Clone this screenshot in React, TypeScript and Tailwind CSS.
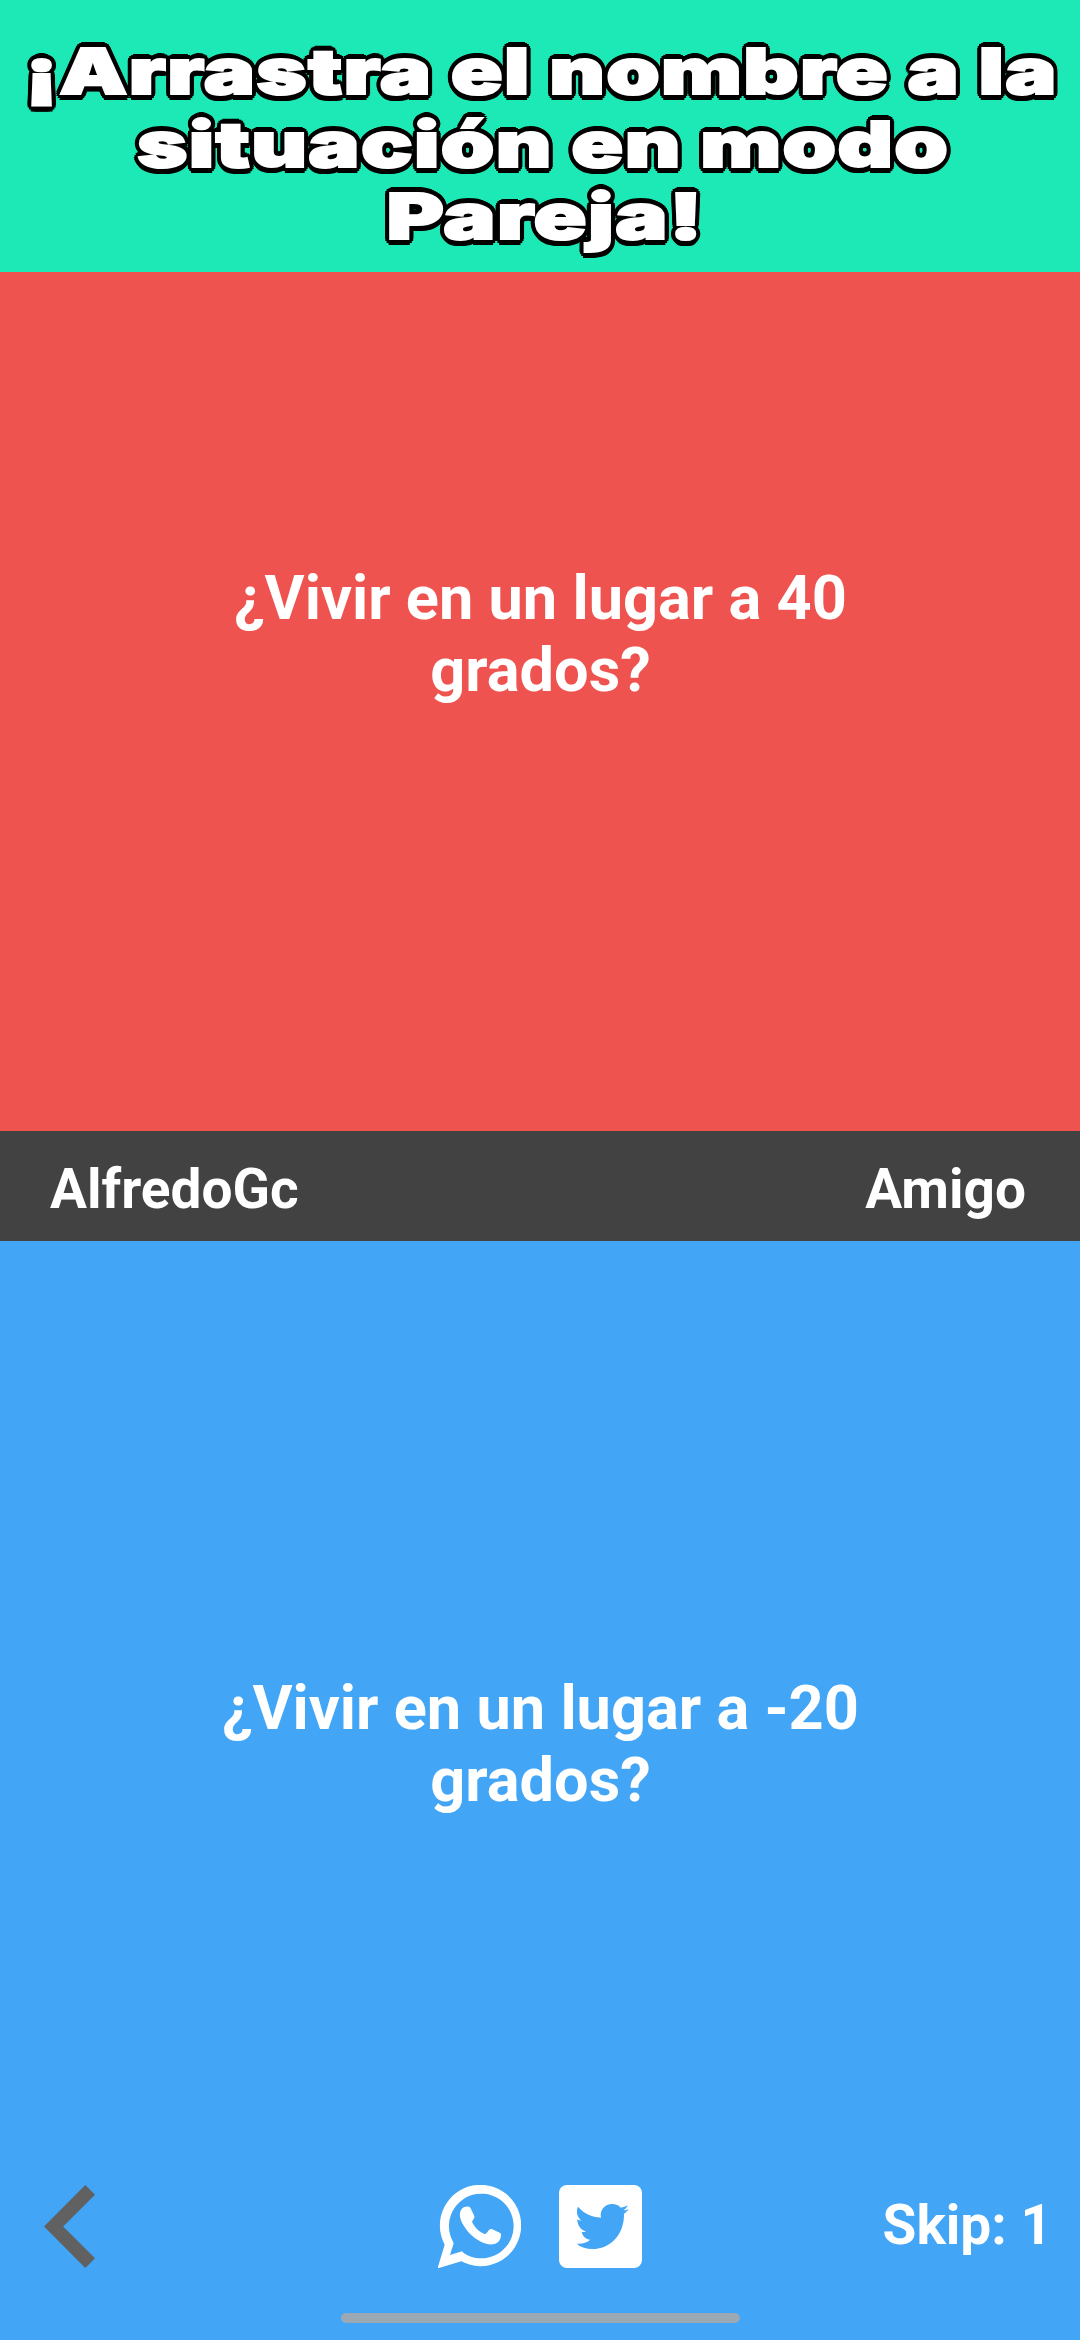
const titleLines = [
  { text: "¡Arrastra el nombre a la", className: "translate-x-[2px] scale-x-[1.36]" },
  { text: "situación en modo", className: "translate-x-[3px] scale-x-[1.362]" },
  { text: "Pareja!", className: "translate-x-[5px] scale-x-[1.39]" },
];

function Question({ text, className }: { text: string; className: string }) {
  return (
    <section className={`flex justify-center ${className}`}>
      <p className="w-[680px] text-center text-[61.3px] leading-[72px] font-bold">
        {text}
      </p>
    </section>
  );
}

function BackIcon() {
  return (
    <svg viewBox="0 0 51 83" className="h-[83px] w-[51px] fill-[#616161]">
      <path d="M41.3 0 51 9.7 19.2 41.5 51 73.3 41.3 83 0 41.5Z" />
    </svg>
  );
}

function WhatsappIcon() {
  return (
    <svg viewBox="12 15 249 249" className="size-[83px] fill-white">
      <path
        fillRule="evenodd"
        d="M32 194A122 122 0 1 1 82 244L15 264Q11 265 12 260ZM57 185A97 97 0 1 1 90 220L84 214 48 225 59 190Z"
      />
      <path d="M83 87C89 81 97 79 105 80C108 81 110 84 111 87L121 108C123 113 119 117 115 123C114 126 115 128 117 131C124 144 136 155 150 161C153 162 155 162 157 160L165 150C168 146 171 146 175 148L197 158C201 160 202 162 201 167C200 178 194 187 184 191C173 195 161 194 149 189C123 178 103 161 88 135C77 117 74 99 83 87Z" />
    </svg>
  );
}

function TwitterIcon() {
  return (
    <svg viewBox="12 15 249 249" className="size-[83px]">
      <rect x="12" y="15" width="249" height="249" rx="24" className="fill-white" />
      <path
        className="fill-[#42a5f5]"
        d="M69 80C86 100 110 111 138 113C133 90 150 72 172 72C183 72 191 76 197 83C205 82 212 79 218 76C216 83 211 88 205 91C211 91 216 89 221 87C217 93 213 97 207 101C208 160 170 207 112 207C95 207 78 202 65 191C81 193 95 188 106 179C93 178 83 169 80 155C84 156 89 156 93 155C77 150 67 136 67 118C71 121 76 122 80 122C67 112 62 95 69 80Z"
      />
    </svg>
  );
}

export default function App() {
  return (
    <main className="flex h-[2340px] w-[1080px] flex-col overflow-hidden bg-[#42a5f5] font-['Roboto',sans-serif] text-white">
      {/* HEADER */}
      <header className="flex h-[272px] shrink-0 flex-col items-center bg-[#1de9b6] pt-[35px]">
        <h1 className="flex flex-col items-center font-['Inter',sans-serif] text-[63px] leading-[72.5px] font-black tracking-[1px] whitespace-nowrap [-webkit-text-stroke:2px_white] [text-shadow:4px_0_black,-4px_0_black,0_6px_black,0_-6px_black,3.7px_2.3px_black,3.7px_-2.3px_black,-3.7px_2.3px_black,-3.7px_-2.3px_black,2.8px_4.2px_black,2.8px_-4.2px_black,-2.8px_4.2px_black,-2.8px_-4.2px_black,1.5px_5.5px_black,1.5px_-5.5px_black,-1.5px_5.5px_black,-1.5px_-5.5px_black]">
          {titleLines.map((line) => (
            <span key={line.text} className={line.className}>
              {line.text}
            </span>
          ))}
        </h1>
      </header>

      <Question
        text="¿Vivir en un lugar a 40 grados?"
        className="h-[859px] shrink-0 bg-[#ef5350] pt-[290px] pl-px"
      />

      {/* PLAYERS */}
      <div className="flex h-[110px] shrink-0 items-center justify-between bg-[#424242] pt-[6px] pr-[54px] pl-[50px] text-[55px] font-bold">
        <span>AlfredoGc</span>
        <span>Amigo</span>
      </div>

      <Question
        text="¿Vivir en un lugar a -20 grados?"
        className="flex-1 pt-[431px] pl-px"
      />

      {/* BOTTOM BAR */}
      <footer className="shrink-0">
        <div className="grid h-[83px] grid-cols-[1fr_auto_1fr] items-center px-[28px]">
          <button aria-label="Atrás" className="pl-[16px]">
            <BackIcon />
          </button>
          <div className="flex gap-[38px]">
            <WhatsappIcon />
            <TwitterIcon />
          </div>
          <span className="pb-[3px] text-right text-[55px] leading-[64px] font-bold">Skip: 1</span>
        </div>
        <div className="mx-auto mt-[45px] mb-[17px] h-[10px] w-[399px] rounded-full bg-[#9aa9b4]" />
      </footer>
    </main>
  );
}
